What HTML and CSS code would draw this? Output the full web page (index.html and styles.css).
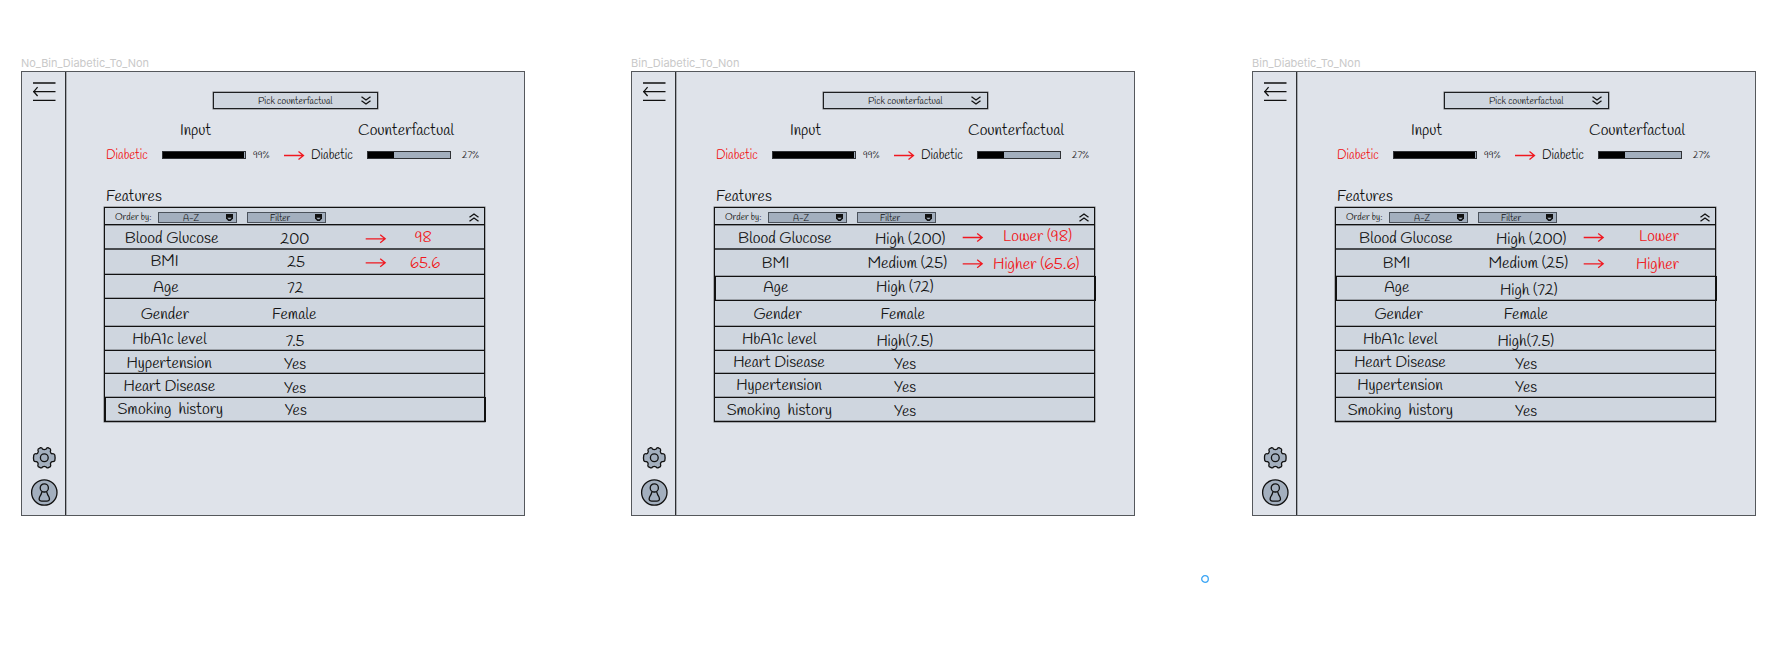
FILE: index.html
```html
<!DOCTYPE html>
<html lang="en">
<head>
<meta charset="utf-8">
<title>Counterfactual boards</title>
<link rel="stylesheet" href="styles.css">
</head>
<body>
<main class="canvas" id="canvas"></main>
<svg class="handle" width="10" height="10" viewBox="0 0 10 10"><circle cx="5" cy="5" r="3.3"/></svg>
<script src="boards.js"></script>
</body>
</html>
```
FILE: styles.css
```css
* { box-sizing: border-box; }
body {
  margin: 0;
  width: 1776px;
  height: 660px;
  overflow: hidden;
  background: #fff;
  font-family: Handlee, Lato, "Open Sans", sans-serif;
  font-weight: 400;
}
svg { display: block; overflow: visible; flex: none; }
text { fill: #111; white-space: pre; }
.red text { fill: #f01820; }
.canvas { display: flex; padding: 54px 0 0 21px; }
.artboard { width: 504px; flex: none; margin-right: 106px; }
.artboard:nth-child(2) { margin-right: 117px; }
.title { height: 17px; font-family: Inter, sans-serif; font-weight: 400; }
.title text { fill: #c9c9c9; }
.board {
  display: flex;
  height: 445px;
  border: 1px solid #55585c;
  background: #dfe3ea;
}
.side {
  display: flex;
  flex-direction: column;
  width: 44px;
  padding: 10px 0 9px 11px;
  border-right: 1px solid #2c2e31;
  box-shadow: 1px 0 rgba(0, 0, 0, .25);
}
.menu { margin-bottom: auto; }
.user { margin: 10px 0 0 -2px; }
.line { fill: none; stroke: #111; stroke-width: 1.3; }
.shape { fill: #a3afbe; stroke: #111; stroke-width: 1.3; stroke-linejoin: round; }
.solid { fill: #111; }
.arrow { fill: none; stroke: #f01820; stroke-width: 1.3; }
.main { width: 458px; padding-top: 20px; }
.picker {
  display: flex;
  align-items: center;
  width: 165px;
  height: 17px;
  margin-left: 147px;
  padding-left: 44px;
  border: 1px solid #1d1f21;
  box-shadow: 0 0 0 .5px rgba(0, 0, 0, .5);
  background: #cfd6df;
}
.picker .chev { margin-left: 28.5px; }
.heads { display: flex; height: 36px; padding-left: 113.5px; gap: 147px; }
.probs { display: flex; align-items: center; height: 20px; padding-left: 39.7px; }
.bar {
  width: 84px;
  height: 8px;
  margin-left: 14.5px;
  border: 1px solid #303236;
  background: #a3afbe;
}
.fill { height: 100%; background: #000; }
.pct { margin-left: 7px; }
.pct.wide { margin-left: 11px; }
.probs .arrow-icon { margin: 0 7px 0 14.5px; }
.features { height: 42px; padding-left: 39.7px; }
.table {
  width: 381px;
  margin-left: 38px;
  border: solid #111;
  border-width: 1px 1px 0;
  box-shadow: 0 0 0 .5px rgba(0, 0, 0, .5);
  background: #cfd6df;
}
.tools {
  display: flex;
  height: 17px;
  padding: 4px 0 0 9.5px;
  border-bottom: 1px solid #111;
  box-shadow: 0 1px rgba(0, 0, 0, .35);
}
.select {
  display: flex;
  align-items: center;
  width: 79px;
  height: 11px;
  border: 1px solid #4b525b;
  background: #a3afbe;
}
.select.sort { margin: 0 10px 0 7px; padding-left: 24px; }
.select.filter { padding-left: 22px; }
.select .badge { margin-left: auto; margin-right: 3px; }
.tools .chev { margin: .5px 0 0 142.5px; }
.row {
  display: grid;
  grid-template-columns: 140px 100px 1fr;
  border-bottom: 1px solid #111;
  box-shadow: inset 0 -1px rgba(0, 0, 0, .25);
}
.row.thick { border-bottom: 2px solid #484b4f; box-shadow: none; }
.row.shifted {
  width: 381px;
  margin-top: -1px;
  border: 1px solid #111;
}
.row.shifted svg { margin-left: -1px; }
.handle { position: absolute; left: 1200px; top: 574px; fill: none; stroke: #3aa5f5; stroke-width: 1.3; }
```
FILE: boards.js
```js
// Label drawn at a fixed width; x and y give the start of the baseline.
function label(text, width, size, height, y, cls = '') {
  return `<svg class="${cls}" width="${width}" height="${height}">${run(text, 0, width, y, size)}</svg>`;
}
function run(text, x, width, y, size = 16) {
  return `<text x="${x}" y="${y}" font-size="${size}" textLength="${width}" lengthAdjust="spacingAndGlyphs" xml:space="preserve">${text}</text>`;
}
const arrowPath = 'M0 4.5H19.5M14.5 .5L19.5 4.5L14.5 8.5';
const badge = '<svg class="badge" width="7" height="7" viewBox="0 0 7 7"><path class="solid" d="M0 0H7V4.5L4.7 7H2.3L0 4.5Z"/><path d="M1.3 3.7H5.7L4.2 5.2H2.8Z" fill="#a3afbe"/></svg>';

// Cells are [text, x, width, baseline] measured from the table's corner.
const yes = (y, x = 180) => ['Yes', x, 22, y];
const first = [
  { end: 42, thick: true, name: ['Blood Glucose', 20.8, 93.6, 35.5], value: ['200', 176.3, 29, 36.5], arrow: [261.7, 31.3], target: ['98', 310.7, 17, 34.7] },
  { end: 67, name: ['BMI', 46.5, 28, 59.3], value: ['25', 183.3, 17.7, 60.3], arrow: [261.7, 55.3], target: ['65.6', 306, 30.3, 61] },
  { end: 91, name: ['Age', 49.3, 25.3, 84.8], value: ['72', 183.3, 16, 86.3] },
  { end: 119, name: ['Gender', 36.7, 48.3, 111.7], value: ['Female', 168, 44.3, 111.5] },
  { end: 143, name: ['HbA1c level', 28.2, 74.5, 136.5], value: ['7.5', 181.7, 18.7, 138.7] },
  { end: 166, name: ['Hypertension', 22.5, 85.3, 160.7], value: yes(162) },
  { end: 190, name: ['Heart Disease', 19.5, 91.6, 183.7], value: yes(185.5) },
  { end: 214, shifted: true, name: ['Smoking  history', 13.5, 105.5, 207], value: yes(208.3, 180.7) }
];
function binned(lower, higher, age, female) {
  return [
    { end: 42, thick: true, name: ['Blood Glucose', 24, 93.6, 36], value: ['High (200)', 161, 70.3, 36.7], arrow: [248.7, 30], target: lower },
    { end: 69, name: ['BMI', 47.8, 27.5, 60.7], value: ['Medium (25)', 153.6, 79.5, 61.3], arrow: [248.7, 56.3], target: higher },
    { end: 93, shifted: true, name: ['Age', 49.3, 25, 85], value: age },
    { end: 119, name: ['Gender', 39.4, 48.3, 112.3], value: female },
    { end: 143, name: ['HbA1c level', 28, 74.5, 136.5], value: ['High(7.5)', 162.4, 56.6, 138.7] },
    { end: 166, name: ['Heart Disease', 19.2, 91.6, 160.2], value: yes(162) },
    { end: 190, name: ['Hypertension', 22.3, 85.5, 183.2], value: yes(185) },
    { end: 214, name: ['Smoking  history', 12.7, 105.3, 207.5], value: yes(208.7) }
  ];
}
const boards = [
  { title: 'No_Bin_Diabetic_To_Non', width: 128, rows: first },
  { title: 'Bin_Diabetic_To_Non', width: 108.5, rows: binned(['Lower (98)', 289, 69, 34.3], ['Higher (65.6)', 279, 86.3, 61.7], ['High (72)', 162, 57.6, 85.3], ['Female', 166.6, 44.3, 112]) },
  { title: 'Bin_Diabetic_To_Non', width: 108.5, rows: binned(['Lower', 304, 40, 34.3], ['Higher', 301, 43, 61.7], ['High (72)', 165, 57.6, 87.5], ['Female', 168.7, 44.3, 112.3]) }
];

function row(r, top) {
  const cell = (c, col) => c ? run(c[0], (c[1] - 1 - col).toFixed(1), c[2], (c[3] - top - 1).toFixed(1)) : '';
  const h = r.end - top;
  const arrow = r.arrow
    ? `<path class="arrow" transform="translate(${r.arrow[0] - 241} ${r.arrow[1] - top - 5})" d="${arrowPath}"/>` : '';
  return `<div class="row${r.thick ? ' thick' : ''}${r.shifted ? ' shifted' : ''}" style="height:${r.shifted ? h + 1 : h}px">
    <svg width="140" height="1">${cell(r.name, 0)}</svg>
    <svg width="100" height="1">${cell(r.value, 140)}</svg>
    <svg class="red" width="130" height="1">${arrow}${cell(r.target, 240)}</svg></div>`;
}

function board(b) {
  let top = 17;
  const rows = b.rows.map(r => { const html = row(r, top); top = r.end; return html; }).join('');
  return `<section class="artboard">
  <div class="title">${label(b.title, b.width, 11, 17, 12.7)}</div>
  <div class="board">
    <aside class="side">
      <svg class="menu" width="23" height="20" viewBox="0 0 23 20"><path class="line" d="M0 1H22.5M0 9.7H22.5M0 18.3H22.5M4.6 5.2L.8 9.7L4.6 14"/></svg>
      <svg width="23" height="22" viewBox="0 0 23 22"><path class="shape" d="M7.7 .7Q9 .6 9.6 2.2Q11.3 3 13 2.2Q13.6 .6 14.9 .7L17.4 2Q18 3 17.3 4.6Q17.8 6.6 19 6.8Q21 6.4 21.8 8Q22.4 10.8 21.8 13.6Q21 15 19 14.6Q17.6 15.2 17.4 16.8Q18.1 18.6 17.4 19.6L14.9 20.9Q13.6 21.2 13 19.8Q11.3 19 9.6 19.8Q9 21.2 7.7 20.9L5.2 19.6Q4.5 18.6 5.2 16.8Q5 15.2 3.6 14.6Q1.6 15 .8 13.6Q.2 10.8 .8 8Q1.6 6.4 3.6 6.8Q4.8 6.6 5.3 4.6Q4.6 3 5.2 2Z"/><circle class="shape" cx="11.3" cy="10.8" r="3.9"/></svg>
      <svg class="user" width="27" height="27" viewBox="0 0 27 27"><circle class="shape" cx="13.3" cy="13.5" r="12.7"/><path class="shape" d="M11 12.6Q10.4 15.2 8.6 18Q7.1 22 10.6 22.2H16Q19.5 22 18 18Q16.2 15.2 15.6 12.6Z"/><circle class="shape" cx="13.3" cy="8.9" r="4.1"/></svg>
    </aside>
    <div class="main">
      <div class="picker">${label('Pick counterfactual', 74.5, 10, 15, 10.5)}
        <svg class="chev" width="10" height="9" viewBox="0 0 10 9"><path class="line" d="M.5 .7L5 4L9.5 .7M.5 4.7L5 8L9.5 4.7"/></svg></div>
      <div class="heads">${label('Input', 31, 16, 36, 26)}${label('Counterfactual', 96, 16, 36, 26)}</div>
      <div class="probs">${label('Diabetic', 42, 13, 20, 14, 'red')}
        <div class="bar"><div class="fill" style="width:98%"></div></div>${label('99%', 16.5, 9, 20, 13, 'pct')}
        <svg class="arrow-icon" width="19.5" height="9"><path class="arrow" d="${arrowPath}"/></svg>
        ${label('Diabetic', 42, 13, 20, 14)}
        <div class="bar"><div class="fill" style="width:32%"></div></div>${label('27%', 17, 9, 20, 13, 'pct wide')}</div>
      <div class="features">${label('Features', 55.7, 16, 42, 35.7)}</div>
      <div class="table">
        <div class="tools">${label('Order by:', 36.5, 9, 12, 7.5)}
          <div class="select sort">${label('A-Z', 16, 9, 9, 8)}${badge}</div>
          <div class="select filter">${label('Filter', 20, 9, 9, 8)}${badge}</div>
          <svg class="chev" width="10" height="9" viewBox="0 0 10 9"><path class="line" d="M.5 4.3L5 1L9.5 4.3M.5 8.3L5 5L9.5 8.3"/></svg></div>
        ${rows}
      </div>
    </div>
  </div>
</section>`;
}
document.getElementById('canvas').innerHTML = boards.map(board).join('');
```
